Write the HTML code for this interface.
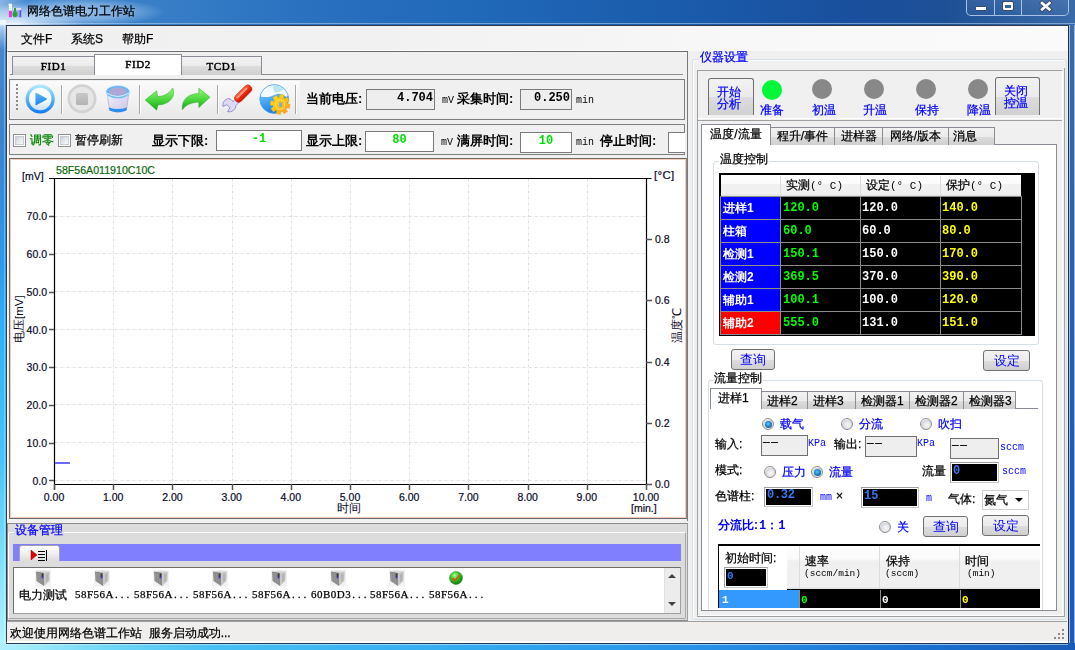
<!DOCTYPE html>
<html><head><meta charset="utf-8">
<style>
*{margin:0;padding:0;box-sizing:border-box}
.t,.tab,.tabsel{will-change:transform;-webkit-text-stroke:0.25px currentColor}
.btn{will-change:transform}
.t.b,.t.mono{-webkit-text-stroke:0}
html,body{width:1075px;height:650px;overflow:hidden}
body{position:relative;font-family:"Liberation Sans",sans-serif;font-size:12px;color:#000;background:#2a6fc0}
.a{position:absolute}
.t{position:absolute;white-space:nowrap;line-height:1}
.mono{font-family:"Liberation Mono",monospace}
.serif{font-family:"Liberation Serif",serif}
.b{font-weight:bold}
.blue{color:#0000ff}
.box{position:absolute;border:1px solid #7a7a7a}
.btn{position:absolute;border:1px solid #707070;border-radius:3px;background:linear-gradient(#f2f2f2 0%,#ebebeb 50%,#dddddd 51%,#cfcfcf 100%);color:#0000ff;font-size:13px;text-align:center}
.tab{position:absolute;border:1px solid #898c95;border-bottom:none;background:linear-gradient(#f2f2f2 0%,#ebebeb 50%,#dddddd 51%,#cfcfcf 100%);text-align:center}
.tabsel{position:absolute;border:1px solid #898c95;border-bottom:none;background:#fff;text-align:center}
</style></head><body>
<!-- title bar -->
<div class="a" style="left:0;top:0;width:1075px;height:25px;background:linear-gradient(90deg,#4a8ed4 0%,#3a80c8 13%,#2a72c0 28%,#2068b8 45%,#1a5aaa 65%,#194f9c 80%,#1e5096 88%,#3a6aa8 100%)"></div>
<div class="a" style="left:0;top:23px;width:1075px;height:1px;background:rgba(170,205,240,0.6)"></div>
<!-- frame sides -->
<div class="a" style="left:0;top:25px;width:6px;height:625px;background:linear-gradient(#4a88d0 0%,#3a82d0 18%,#2c9aec 38%,#30b2f8 50%,#48c4f8 70%,#88e4fa 88%,#b4f4fc 100%)"></div><div class="a" style="left:4px;top:25px;width:1px;height:618px;background:rgba(255,255,255,0.3)"></div><div class="a" style="left:0;top:20px;width:6px;height:30px;background:linear-gradient(rgba(235,250,255,0.9),rgba(220,240,255,0.5) 40%,rgba(200,230,255,0))"></div>
<div class="a" style="left:1068px;top:25px;width:7px;height:625px;background:linear-gradient(#3a6aa8,#2e62a8 30%,#1a5cb0 75%,#1a5cb8)"></div><div class="a" style="left:1074px;top:25px;width:1px;height:625px;background:rgba(200,220,240,0.7)"></div><div class="a" style="left:1068px;top:25px;width:1px;height:619px;background:#1c3050"></div><div class="a" style="left:1069px;top:25px;width:1px;height:619px;background:rgba(190,215,245,0.8)"></div>
<div class="a" style="left:0;top:643px;width:1075px;height:7px;background:linear-gradient(90deg,#b0f0fc 0%,#70d8f8 10%,#48c0f4 20%,#34acf0 42%,#2892e8 65%,#1a72d2 85%,#1a5cb8 100%)"></div><div class="a" style="left:6px;top:643px;width:1062px;height:1px;background:#1a3858"></div><div class="a" style="left:6px;top:644px;width:1062px;height:1px;background:rgba(230,245,255,0.55)"></div>
<!-- client area -->
<div class="a" style="left:6px;top:25px;width:1062px;height:618px;background:#f0f0f0;border:1px solid #303a4a;border-right:none;border-bottom-color:#e8f0f8"></div>
<!-- menu -->
<div class="a" style="left:7px;top:26px;width:1061px;height:25px;background:linear-gradient(90deg,#f0f0f0 0%,#f1f1f1 35%,#f8f8f8 70%,#fafafa 100%)"></div><div class="a" style="left:7px;top:50px;width:681px;height:1px;background:#fcfcfc"></div>
<div class="t" style="left:21px;top:33px;font-size:12px">文件F</div>
<div class="t" style="left:71px;top:33px;font-size:12px">系统S</div>
<div class="t" style="left:122px;top:33px;font-size:12px">帮助F</div>
<div class="a" style="left:0;top:0;width:200px;height:25px;background:radial-gradient(ellipse 70px 20px at 15px 24px,rgba(245,252,255,0.9) 0%,rgba(225,240,255,0.6) 40%,rgba(190,220,250,0) 100%),radial-gradient(ellipse 85px 14px at 80px 12px,rgba(220,238,255,0.55) 0%,rgba(210,230,255,0.4) 55%,rgba(190,220,250,0) 100%)"></div>
<div class="a" style="left:0;top:0;width:26px;height:25px;background:linear-gradient(90deg,rgba(255,255,255,0.35),rgba(255,255,255,0))"></div>
<svg class="a" style="left:7px;top:3px" width="16" height="16" viewBox="0 0 16 16">
<path d="M1,0.8 H5 V14.2 H1.8 V2.2 Z" fill="#f4f8ff"/><rect x="1.8" y="7.8" width="3.2" height="6.4" fill="#e83ae0"/>
<rect x="6" y="4.8" width="8.2" height="9.4" fill="#a8a0f0"/><rect x="12.6" y="4.8" width="1.6" height="9.4" fill="#5a50d8"/><rect x="6" y="4.8" width="8.2" height="2.4" fill="#dcdcf8"/>
<path d="M7,5 H9 V8.5 C11,9.5 11.3,13.5 8,14.3 C4.7,13.8 5,9.5 7,8.5 Z" fill="#20a830"/>
</svg>
<div class="t" style="left:27px;top:5px;font-size:12px;color:#000">网络色谱电力工作站</div>
<!-- window buttons -->
<div class="a" style="left:966px;top:-2px;width:103px;height:18px;border:1px solid rgba(180,205,235,0.9);border-radius:0 0 5px 5px;background:linear-gradient(rgba(255,255,255,0.08),rgba(255,255,255,0.02))"></div>
<div class="a" style="left:994px;top:0;width:1px;height:15px;background:rgba(180,205,235,0.9)"></div>
<div class="a" style="left:1021px;top:0;width:1px;height:15px;background:rgba(180,205,235,0.9)"></div>
<div class="a" style="left:975px;top:6px;width:12px;height:5px;background:#fff;border:1px solid #3a4a6a;border-radius:1px"></div>
<div class="a" style="left:1003px;top:2px;width:10px;height:8px;border:2px solid #fff;border-top-width:3px;outline:1px solid #3a4a6a;border-radius:1px"></div>
<svg class="a" style="left:1038px;top:0px" width="16" height="13" viewBox="0 0 16 13"><path d="M4,3 L11.5,9.5 M11.5,3 L4,9.5" stroke="#3a4a6a" stroke-width="4.4" stroke-linecap="square"/><path d="M4,3 L11.5,9.5 M11.5,3 L4,9.5" stroke="#fff" stroke-width="2.6" stroke-linecap="square"/></svg>


<!-- LEFT PANEL -->
<div class="a" style="left:7px;top:51px;width:681px;height:470px;border-left:1px solid #fff;border-top:1px solid #6e6e6e;border-right:1px solid #7a7a7a;background:#f0f0f0"></div>
<!-- tab strip line -->
<div class="a" style="left:10px;top:74px;width:673px;height:1px;background:#8c8e94"></div>
<div class="tab" style="left:12px;top:56px;width:83px;height:19px;font-size:11px;font-family:'Liberation Serif',serif;-webkit-text-stroke:0.45px #000;line-height:19px;letter-spacing:0.6px">FID1</div>
<div class="tabsel" style="left:94px;top:54px;width:88px;height:21px;font-size:11px;font-family:'Liberation Serif',serif;-webkit-text-stroke:0.45px #000;line-height:18px;letter-spacing:0.6px">FID2</div>
<div class="tab" style="left:181px;top:56px;width:81px;height:19px;font-size:11px;font-family:'Liberation Serif',serif;-webkit-text-stroke:0.45px #000;line-height:19px;letter-spacing:0.6px">TCD1</div>
<!-- toolbar box -->
<div class="a" style="left:9px;top:79px;width:676px;height:41px;border:1px solid #7e7e7e;background:#f0f0f0"></div>
<div class="a" style="left:11px;top:81px;width:289px;height:37px;background:linear-gradient(#fafafa,#f0f0f0 60%,#e8e8e8)"></div>
<!-- row2 box -->
<div class="a" style="left:9px;top:124px;width:676px;height:31px;border:1px solid #7e7e7e;background:#f0f0f0"></div>
<!-- chart -->
<div class="a" style="left:9px;top:158px;width:678px;height:361px;border:1px solid #6a6a6a;border-right-color:#8a8a8a;background:#fff"></div>
<div class="a" style="left:10px;top:159px;width:676px;height:359px;border:1px solid #f8cdb8;background:#fff"></div>
<!-- device mgmt panel -->
<div class="a" style="left:7px;top:523px;width:681px;height:98px;border:1px solid #8a8a8a;border-right-color:#a0a0a0;background:#dcdcdc"></div>
<!-- status bar -->
<div class="a" style="left:7px;top:621px;width:1060px;height:22px;border-top:1px solid #a0a0a0;background:#f0eded"></div>
<div class="a" style="left:7px;top:641px;width:1061px;height:2px;background:#fdfdfd"></div>
<div class="t" style="left:10px;top:627px;font-size:12px">欢迎使用网络色谱工作站&nbsp; 服务启动成功...</div>
<svg class="a" style="left:1054px;top:628px" width="12" height="12"><g fill="#8a8a8a"><rect x="8" y="1" width="2" height="2"/><rect x="4" y="5" width="2" height="2"/><rect x="8" y="5" width="2" height="2"/><rect x="0" y="9" width="2" height="2"/><rect x="4" y="9" width="2" height="2"/><rect x="8" y="9" width="2" height="2"/></g></svg>
<!-- RIGHT PANEL -->
<div class="a" style="left:688px;top:51px;width:380px;height:570px;background:#f0f0f0"></div>

<!-- CHART -->
<svg class="a" style="left:11px;top:159px" width="674" height="358" viewBox="11 159 674 358" font-family="Liberation Sans, sans-serif" font-size="11">
<g stroke="#f5f5f5" stroke-width="1"><line x1="113.5" y1="179" x2="113.5" y2="484" /><line x1="172.5" y1="179" x2="172.5" y2="484" /><line x1="232.5" y1="179" x2="232.5" y2="484" /><line x1="291.5" y1="179" x2="291.5" y2="484" /><line x1="350.5" y1="179" x2="350.5" y2="484" /><line x1="409.5" y1="179" x2="409.5" y2="484" /><line x1="468.5" y1="179" x2="468.5" y2="484" /><line x1="528.5" y1="179" x2="528.5" y2="484" /><line x1="587.5" y1="179" x2="587.5" y2="484" /><line x1="55" y1="480.5" x2="646" y2="480.5" /><line x1="55" y1="442.5" x2="646" y2="442.5" /><line x1="55" y1="404.5" x2="646" y2="404.5" /><line x1="55" y1="367.5" x2="646" y2="367.5" /><line x1="55" y1="329.5" x2="646" y2="329.5" /><line x1="55" y1="291.5" x2="646" y2="291.5" /><line x1="55" y1="253.5" x2="646" y2="253.5" /><line x1="55" y1="216.5" x2="646" y2="216.5" /></g><g stroke="#dedede" stroke-width="1" stroke-dasharray="2,4"><line x1="113.5" y1="179" x2="113.5" y2="484" /><line x1="172.5" y1="179" x2="172.5" y2="484" /><line x1="232.5" y1="179" x2="232.5" y2="484" /><line x1="291.5" y1="179" x2="291.5" y2="484" /><line x1="350.5" y1="179" x2="350.5" y2="484" /><line x1="409.5" y1="179" x2="409.5" y2="484" /><line x1="468.5" y1="179" x2="468.5" y2="484" /><line x1="528.5" y1="179" x2="528.5" y2="484" /><line x1="587.5" y1="179" x2="587.5" y2="484" /><line x1="55" y1="480.5" x2="646" y2="480.5" /><line x1="55" y1="442.5" x2="646" y2="442.5" /><line x1="55" y1="404.5" x2="646" y2="404.5" /><line x1="55" y1="367.5" x2="646" y2="367.5" /><line x1="55" y1="329.5" x2="646" y2="329.5" /><line x1="55" y1="291.5" x2="646" y2="291.5" /><line x1="55" y1="253.5" x2="646" y2="253.5" /><line x1="55" y1="216.5" x2="646" y2="216.5" /></g>
<path d="M49,178.5 H651.5 M54.5,178 V490 M646.5,178 V484 M54,484.5 H646.5" stroke="#000" stroke-width="1.2" fill="none"/>
<path d="M49,480.5 H54 M49,443.5 H54 M49,405.5 H54 M49,367.5 H54 M49,329.5 H54 M49,292.5 H54 M49,254.5 H54 M49,216.5 H54 M54.5,484 V490 M113.5,484 V490 M172.5,484 V490 M232.5,484 V490 M291.5,484 V490 M350.5,484 V490 M409.5,484 V490 M468.5,484 V490 M528.5,484 V490 M587.5,484 V490 M646.5,484 V490 M646,484.5 H652 M646,423.5 H652 M646,362.5 H652 M646,300.5 H652 M646,239.5 H652" stroke="#555" stroke-width="1.5" fill="none"/>
<g fill="#0a0a28" stroke="#0a0a28" stroke-width="0.2" font-size="10.5"><text x="47" y="484.5" text-anchor="end">0.0</text><text x="47" y="446.7" text-anchor="end">10.0</text><text x="47" y="409.0" text-anchor="end">20.0</text><text x="47" y="371.2" text-anchor="end">30.0</text><text x="47" y="333.5" text-anchor="end">40.0</text><text x="47" y="295.7" text-anchor="end">50.0</text><text x="47" y="257.9" text-anchor="end">60.0</text><text x="47" y="220.2" text-anchor="end">70.0</text><text x="54.0" y="501" text-anchor="middle">0.00</text><text x="113.2" y="501" text-anchor="middle">1.00</text><text x="172.4" y="501" text-anchor="middle">2.00</text><text x="231.6" y="501" text-anchor="middle">3.00</text><text x="290.8" y="501" text-anchor="middle">4.00</text><text x="350.0" y="501" text-anchor="middle">5.00</text><text x="409.2" y="501" text-anchor="middle">6.00</text><text x="468.4" y="501" text-anchor="middle">7.00</text><text x="527.6" y="501" text-anchor="middle">8.00</text><text x="586.8" y="501" text-anchor="middle">9.00</text><text x="646.0" y="501" text-anchor="middle">10.00</text><text x="655" y="488.0">0.0</text><text x="655" y="426.8">0.2</text><text x="655" y="365.6">0.4</text><text x="655" y="304.4">0.6</text><text x="655" y="243.2">0.8</text><text x="22" y="180">[mV]</text><text x="654" y="179" font-size="11.5" letter-spacing="0.3">[°C]</text><text x="631" y="512">[min.]</text><text x="349" y="512" text-anchor="middle" font-size="12" stroke-width="0">时间</text><text x="56" y="174" fill="#0a6a0a" stroke="#0a6a0a" textLength="99" lengthAdjust="spacingAndGlyphs">58F56A011910C10C</text><text transform="translate(23,343) rotate(-90)" font-size="11.5" stroke-width="0">电压[mV]</text><text transform="translate(681,343) rotate(-90)" font-size="11.5" stroke-width="0">温度℃</text></g>
<line x1="55" y1="463" x2="70" y2="463" stroke="#6a6aff" stroke-width="2"/>
</svg>

<!-- TOOLBAR ICONS -->
<svg class="a" style="left:11px;top:81px" width="290" height="38" viewBox="11 81 290 38">
<defs>
<linearGradient id="gPlay" x1="0" y1="0" x2="0" y2="1"><stop offset="0" stop-color="#b8ecff"/><stop offset="0.5" stop-color="#58b8f8"/><stop offset="1" stop-color="#1078ee"/></linearGradient>
<linearGradient id="gPlayIn" x1="0" y1="0" x2="0" y2="1"><stop offset="0" stop-color="#ffffff"/><stop offset="0.6" stop-color="#f4f8ff"/><stop offset="1" stop-color="#c8e0fa"/></linearGradient>
<linearGradient id="gTri" x1="0" y1="0" x2="0" y2="1"><stop offset="0" stop-color="#5ab4f8"/><stop offset="1" stop-color="#1a84f0"/></linearGradient>
<linearGradient id="gArrow" x1="0" y1="0" x2="0" y2="1"><stop offset="0" stop-color="#90f878"/><stop offset="0.5" stop-color="#50d840"/><stop offset="1" stop-color="#10a818"/></linearGradient>
<linearGradient id="gBody" x1="0" y1="0" x2="1" y2="1"><stop offset="0" stop-color="#f4f2fc"/><stop offset="1" stop-color="#c8c4e8"/></linearGradient>
<linearGradient id="gGlobe" x1="0" y1="0" x2="0.3" y2="1"><stop offset="0" stop-color="#a8dcff"/><stop offset="0.45" stop-color="#58b4f8"/><stop offset="1" stop-color="#1a7ee8"/></linearGradient>
<linearGradient id="gGear" x1="0" y1="0" x2="1" y2="1"><stop offset="0" stop-color="#ffe020"/><stop offset="0.5" stop-color="#ffc010"/><stop offset="1" stop-color="#f89030"/></linearGradient>
<linearGradient id="gRed" x1="0" y1="0" x2="0" y2="1"><stop offset="0" stop-color="#ff6a48"/><stop offset="0.5" stop-color="#f03010"/><stop offset="1" stop-color="#c81400"/></linearGradient>
<linearGradient id="gStop" x1="0" y1="0" x2="0" y2="1"><stop offset="0" stop-color="#c8c8c8"/><stop offset="1" stop-color="#b4b4b4"/></linearGradient>
</defs>
<!-- grip -->
<g fill="#8a8a8a"><rect x="16" y="84" width="2" height="2"/><rect x="16" y="88" width="2" height="2"/><rect x="16" y="92" width="2" height="2"/><rect x="16" y="96" width="2" height="2"/><rect x="16" y="100" width="2" height="2"/><rect x="16" y="104" width="2" height="2"/><rect x="16" y="108" width="2" height="2"/></g>
<!-- separators -->
<g fill="#a8a8a8"><rect x="61" y="85" width="1" height="29"/><rect x="139" y="85" width="1" height="29"/><rect x="217" y="85" width="1" height="29"/><rect x="295" y="85" width="1" height="29"/></g>
<g fill="#ffffff"><rect x="62" y="85" width="1" height="29"/><rect x="140" y="85" width="1" height="29"/><rect x="218" y="85" width="1" height="29"/><rect x="296" y="85" width="1" height="29"/></g>
<!-- play -->
<circle cx="40.2" cy="99" r="14.6" fill="url(#gPlay)"/>
<circle cx="40.2" cy="99" r="11.2" fill="url(#gPlayIn)"/>
<path d="M35.5,93.5 Q35,92.5 36.2,92.8 L46.5,98.2 Q47.5,99 46.5,99.8 L36.2,105.2 Q35,105.5 35.5,104.5 Z" fill="url(#gTri)"/>
<!-- stop -->
<circle cx="82" cy="98.7" r="14.5" fill="#d2d2d2"/>
<circle cx="82" cy="98.7" r="11.8" fill="#e6e6e6"/>
<rect x="76" y="93" width="12" height="12" rx="1.5" fill="url(#gStop)"/>
<!-- bucket -->
<path d="M107,92 L109.5,110 Q117.8,114.5 126.5,110 L129,92 Z" fill="url(#gBody)" stroke="#a8a0d0" stroke-width="0.6"/>
<path d="M109,107.5 Q117.8,110.5 126.8,107.5 L126.5,110.5 Q117.8,114 109.5,110.5 Z" fill="#2a8cf0"/>
<ellipse cx="117.8" cy="92" rx="11.6" ry="6.3" fill="#58b8ff" stroke="#9ad0f8" stroke-width="0.6"/>
<ellipse cx="117.8" cy="91.6" rx="9" ry="4.3" fill="#aea6d6"/>
<path d="M106.6,93 Q117.8,100 129,93" stroke="#e8f4ff" stroke-width="1" fill="none"/>
<!-- undo -->
<path d="M145.2,100 L156.7,90.8 L157.6,96.5 C164,96.5 169.5,93.5 172.6,88 C176,95 171,104.5 158,105 L156.7,110.2 Z" fill="url(#gArrow)" stroke="#2aa82a" stroke-width="0.5"/>
<!-- redo -->
<path d="M210,97.2 L198.8,88.2 L198.8,93.4 C188,93.6 181,100.5 182.4,109.8 C186,104.5 192,102.3 198.8,102.3 L198.8,107.6 Z" fill="url(#gArrow)" stroke="#2aa82a" stroke-width="0.5"/>
<!-- wrench -->
<path d="M228.8,98.6 C225,99 222.2,102.5 223,106.5 L226.8,104.6 L230,107.6 L227.6,111.6 C231.8,112.6 235.8,109.6 236,105.4 L239.5,101.8 L236.2,98.4 L232.8,101.8 C231.8,100 230.5,98.8 228.8,98.6 Z" fill="#dcdaf4" stroke="#8a86c8" stroke-width="0.9"/>
<g transform="translate(243.2,93.6) rotate(-45)"><rect x="-10.5" y="-4" width="21" height="8" rx="4" fill="url(#gRed)" stroke="#c81800" stroke-width="0.6"/><rect x="-8" y="-2.3" width="15" height="2" rx="1" fill="#ffb8a8" opacity="0.75"/></g>
<!-- globe -->
<circle cx="274.2" cy="99" r="14.4" fill="url(#gGlobe)"/>
<path d="M260.2,95 C261.5,88 267,84.6 274.2,84.6 C281.5,84.6 287,89 288.4,95.5 L286.5,97 C283,94.5 279.5,92.6 275.5,94.5 C271,96.8 266,97.8 260.6,96.5 Z" fill="#f2f9ff"/>
<path d="M272.5,86 C276.5,85 281,86.5 284,89.5 C281,91 278,93 274.5,92.5 C274,90 273,88 272.5,86 Z" fill="#b8e4fc"/>
<circle cx="274.2" cy="99" r="14.4" fill="none" stroke="#3a98ec" stroke-width="0.7"/>
<path d="M279.31,97.35 L279.85,94.61 L283.95,95.33 L283.51,98.10 L284.69,98.85 L287.02,97.29 L289.41,100.69 L287.14,102.34 L287.45,103.71 L290.19,104.25 L289.47,108.35 L286.70,107.91 L285.95,109.09 L287.51,111.42 L284.11,113.81 L282.46,111.54 L281.09,111.85 L280.55,114.59 L276.45,113.87 L276.89,111.10 L275.71,110.35 L273.38,111.91 L270.99,108.51 L273.26,106.86 L272.95,105.49 L270.21,104.95 L270.93,100.85 L273.70,101.29 L274.45,100.11 L272.89,97.78 L276.29,95.39 L277.94,97.66 Z" fill="url(#gGear)" stroke="#f0b018" stroke-width="0.5"/>
<circle cx="280.2" cy="104.6" r="4.6" fill="none" stroke="#ffe070" stroke-width="1.1"/>
<ellipse cx="280.5" cy="104.6" rx="1.4" ry="2.6" fill="#68b0e8"/>
</svg>
<!-- toolbar labels -->
<div class="t b" style="left:306px;top:92px;font-size:13px">当前电压:</div>
<div class="a" style="left:366px;top:89px;width:69px;height:21px;border:1px solid #7a7a7a;background:#eeeeee"></div>
<div class="t mono b" style="left:366px;top:92px;width:67px;text-align:right;font-size:12px">4.704</div>
<div class="t mono" style="left:442px;top:96px;font-size:10px">mV</div>
<div class="t b" style="left:457px;top:92px;font-size:13px">采集时间:</div>
<div class="a" style="left:520px;top:89px;width:52px;height:21px;border:1px solid #7a7a7a;background:#eeeeee"></div>
<div class="t mono b" style="left:520px;top:92px;width:50px;text-align:right;font-size:12px">0.250</div>
<div class="t mono" style="left:576px;top:96px;font-size:10px">min</div>
<!-- row 2 -->
<div class="a" style="left:13px;top:134px;width:13px;height:13px;border:1px solid #8e8f8f;background:#fff;padding:1px"><div style="width:100%;height:100%;border:1px solid #c8ccd4;background:linear-gradient(135deg,#c8ccd6 0%,#e4e6ea 45%,#f8f8f8 100%)"></div></div>
<div class="t" style="left:30px;top:134px;font-size:12px;color:#008000">调零</div>
<div class="a" style="left:58px;top:134px;width:13px;height:13px;border:1px solid #8e8f8f;background:#fff;padding:1px"><div style="width:100%;height:100%;border:1px solid #c8ccd4;background:linear-gradient(135deg,#c8ccd6 0%,#e4e6ea 45%,#f8f8f8 100%)"></div></div>
<div class="t" style="left:75px;top:134px;font-size:12px">暂停刷新</div>
<div class="t b" style="left:152px;top:134px;font-size:13px">显示下限:</div>
<div class="a" style="left:216px;top:130px;width:86px;height:21px;border:1px solid #7a7a7a;background:#fff"></div>
<div class="t mono b" style="left:216px;top:133px;width:86px;text-align:center;font-size:12px;color:#00e000">-1</div>
<div class="t b" style="left:306px;top:134px;font-size:13px">显示上限:</div>
<div class="a" style="left:365px;top:131px;width:69px;height:21px;border:1px solid #7a7a7a;background:#fff"></div>
<div class="t mono b" style="left:365px;top:134px;width:69px;text-align:center;font-size:12px;color:#00e000">80</div>
<div class="t mono" style="left:441px;top:138px;font-size:10px">mV</div>
<div class="t b" style="left:457px;top:134px;font-size:13px">满屏时间:</div>
<div class="a" style="left:520px;top:132px;width:52px;height:21px;border:1px solid #7a7a7a;background:#fff"></div>
<div class="t mono b" style="left:520px;top:135px;width:52px;text-align:center;font-size:12px;color:#00e000">10</div>
<div class="t mono" style="left:576px;top:138px;font-size:10px">min</div>
<div class="t b" style="left:600px;top:134px;font-size:13px">停止时间:</div>
<div class="a" style="left:668px;top:132px;width:17px;height:21px;border:1px solid #7a7a7a;border-right:none;background:#fff"></div>

<!-- RIGHT PANEL DETAIL -->
<div class="a" style="left:692px;top:59px;width:375px;height:561px;border:1px solid #d5dfe5;border-radius:3px;box-shadow:inset 1px 1px 0 #fff"></div>
<div class="t blue" style="left:699px;top:51px;font-size:12px;background:#f0f0f0;padding:0 1px">仪器设置</div>
<div class="a" style="left:697px;top:70px;width:366px;height:546px;border:1px solid #a0a0a0;border-right-color:#fff;border-bottom-color:#fff;background:#f0f0f0"></div>
<div class="a" style="left:698px;top:118px;width:364px;height:1px;background:#fff"></div>
<div class="a" style="left:698px;top:120px;width:364px;height:1px;background:#a0a0a0"></div>
<div class="a" style="left:1064px;top:68px;width:1px;height:549px;background:#a0a0a0"></div><div class="a" style="left:697px;top:616px;width:368px;height:1px;background:#a0a0a0"></div>
<!-- start button -->
<div class="a" style="left:708px;top:78px;width:46px;height:37px;border:1px solid #707070;border-bottom:none;border-radius:3px 3px 0 0;background:linear-gradient(#f2f2f2 0%,#ebebeb 50%,#dddddd 51%,#d0d0d0 100%)"></div>
<div class="t blue" style="left:717px;top:86px;font-size:12px;line-height:12px;letter-spacing:-0.5px">开始<br>分析</div>
<div class="a" style="left:995px;top:77px;width:45px;height:38px;border:1px solid #707070;border-bottom:none;border-radius:3px 3px 0 0;background:linear-gradient(#f2f2f2 0%,#ebebeb 50%,#dddddd 51%,#d0d0d0 100%)"></div>
<div class="t blue" style="left:1004px;top:85px;font-size:12px;line-height:12px;letter-spacing:-0.5px">关闭<br>控温</div>
<!-- lights -->
<div class="a" style="left:762px;top:80px;width:20px;height:20px;border-radius:50%;background:#00f838"></div>
<div class="a" style="left:812px;top:79px;width:20px;height:20px;border-radius:50%;background:#888"></div>
<div class="a" style="left:864px;top:79px;width:20px;height:20px;border-radius:50%;background:#888"></div>
<div class="a" style="left:916px;top:79px;width:20px;height:20px;border-radius:50%;background:#888"></div>
<div class="a" style="left:968px;top:79px;width:20px;height:20px;border-radius:50%;background:#888"></div>
<div class="t blue" style="left:760px;top:104px;font-size:12px">准备</div>
<div class="t blue" style="left:812px;top:104px;font-size:12px">初温</div>
<div class="t blue" style="left:863px;top:104px;font-size:12px">升温</div>
<div class="t blue" style="left:915px;top:104px;font-size:12px">保持</div>
<div class="t blue" style="left:967px;top:104px;font-size:12px">降温</div>
<!-- main tab control -->
<div class="a" style="left:701px;top:144px;width:356px;height:467px;border:1px solid #898c95;background:#fff"></div>
<div class="tab" style="left:770px;top:127px;width:65px;height:18px;font-size:12px;line-height:17px">程升/事件</div>
<div class="tab" style="left:834px;top:127px;width:49px;height:18px;font-size:12px;line-height:17px">进样器</div>
<div class="tab" style="left:882px;top:127px;width:67px;height:18px;font-size:12px;line-height:17px">网络/版本</div>
<div class="tab" style="left:948px;top:127px;width:47px;height:18px;font-size:12px;line-height:17px;text-align:left;padding-left:4px">消息</div>
<div class="tabsel" style="left:701px;top:124px;width:70px;height:21px;font-size:12px;line-height:18px">温度/流量</div>
<!-- temp group -->
<div class="a" style="left:713px;top:161px;width:326px;height:184px;border:1px solid #d5dfe5;border-radius:3px"></div>
<div class="t" style="left:719px;top:153px;font-size:12px;background:#fff;padding:0 1px">温度控制</div>

<!-- TEMP TABLE -->
<div class="a" style="left:719px;top:173px;width:316px;height:163px;background:#000"></div>
<div class="a" style="left:721px;top:175px;width:300px;height:21px;background:linear-gradient(#fdfdfd 0%,#fbfbfb 40%,#f0f0f0 45%,#f0f0f0 90%,#dedede 100%)"></div>
<div class="a" style="left:780px;top:176px;width:1px;height:19px;background:#dcdcdc"></div>
<div class="a" style="left:860px;top:176px;width:1px;height:19px;background:#dcdcdc"></div>
<div class="a" style="left:940px;top:176px;width:1px;height:19px;background:#dcdcdc"></div>
<div class="t" style="left:786px;top:179px;font-size:12px">实测<span class="mono" style="font-size:11px;-webkit-text-stroke:0">(° C)</span></div>
<div class="t" style="left:866px;top:179px;font-size:12px">设定<span class="mono" style="font-size:11px;-webkit-text-stroke:0">(° C)</span></div>
<div class="t" style="left:946px;top:179px;font-size:12px">保护<span class="mono" style="font-size:11px;-webkit-text-stroke:0">(° C)</span></div>
<div class="a" style="left:720px;top:196px;width:302px;height:139px;background:#8c8c8c"></div>
<div class="a" style="left:721px;top:197px;width:59px;height:22px;background:#0000ff"></div>
<div class="a" style="left:781px;top:197px;width:79px;height:22px;background:#000"></div>
<div class="a" style="left:861px;top:197px;width:79px;height:22px;background:#000"></div>
<div class="a" style="left:941px;top:197px;width:80px;height:22px;background:#000"></div>
<div class="t b" style="left:723px;top:202px;font-size:12px;color:#fff">进样1</div>
<div class="t mono b" style="left:783px;top:202px;font-size:12px;color:#00ff00">120.0</div>
<div class="t mono b" style="left:862px;top:202px;font-size:12px;color:#fff">120.0</div>
<div class="t mono b" style="left:942px;top:202px;font-size:12px;color:#ffff00">140.0</div>
<div class="a" style="left:721px;top:220px;width:59px;height:22px;background:#0000ff"></div>
<div class="a" style="left:781px;top:220px;width:79px;height:22px;background:#000"></div>
<div class="a" style="left:861px;top:220px;width:79px;height:22px;background:#000"></div>
<div class="a" style="left:941px;top:220px;width:80px;height:22px;background:#000"></div>
<div class="t b" style="left:723px;top:225px;font-size:12px;color:#fff">柱箱</div>
<div class="t mono b" style="left:783px;top:225px;font-size:12px;color:#00ff00">60.0</div>
<div class="t mono b" style="left:862px;top:225px;font-size:12px;color:#fff">60.0</div>
<div class="t mono b" style="left:942px;top:225px;font-size:12px;color:#ffff00">80.0</div>
<div class="a" style="left:721px;top:243px;width:59px;height:22px;background:#0000ff"></div>
<div class="a" style="left:781px;top:243px;width:79px;height:22px;background:#000"></div>
<div class="a" style="left:861px;top:243px;width:79px;height:22px;background:#000"></div>
<div class="a" style="left:941px;top:243px;width:80px;height:22px;background:#000"></div>
<div class="t b" style="left:723px;top:248px;font-size:12px;color:#fff">检测1</div>
<div class="t mono b" style="left:783px;top:248px;font-size:12px;color:#00ff00">150.1</div>
<div class="t mono b" style="left:862px;top:248px;font-size:12px;color:#fff">150.0</div>
<div class="t mono b" style="left:942px;top:248px;font-size:12px;color:#ffff00">170.0</div>
<div class="a" style="left:721px;top:266px;width:59px;height:22px;background:#0000ff"></div>
<div class="a" style="left:781px;top:266px;width:79px;height:22px;background:#000"></div>
<div class="a" style="left:861px;top:266px;width:79px;height:22px;background:#000"></div>
<div class="a" style="left:941px;top:266px;width:80px;height:22px;background:#000"></div>
<div class="t b" style="left:723px;top:271px;font-size:12px;color:#fff">检测2</div>
<div class="t mono b" style="left:783px;top:271px;font-size:12px;color:#00ff00">369.5</div>
<div class="t mono b" style="left:862px;top:271px;font-size:12px;color:#fff">370.0</div>
<div class="t mono b" style="left:942px;top:271px;font-size:12px;color:#ffff00">390.0</div>
<div class="a" style="left:721px;top:289px;width:59px;height:22px;background:#0000ff"></div>
<div class="a" style="left:781px;top:289px;width:79px;height:22px;background:#000"></div>
<div class="a" style="left:861px;top:289px;width:79px;height:22px;background:#000"></div>
<div class="a" style="left:941px;top:289px;width:80px;height:22px;background:#000"></div>
<div class="t b" style="left:723px;top:294px;font-size:12px;color:#fff">辅助1</div>
<div class="t mono b" style="left:783px;top:294px;font-size:12px;color:#00ff00">100.1</div>
<div class="t mono b" style="left:862px;top:294px;font-size:12px;color:#fff">100.0</div>
<div class="t mono b" style="left:942px;top:294px;font-size:12px;color:#ffff00">120.0</div>
<div class="a" style="left:721px;top:312px;width:59px;height:22px;background:#ff0000"></div>
<div class="a" style="left:781px;top:312px;width:79px;height:22px;background:#000"></div>
<div class="a" style="left:861px;top:312px;width:79px;height:22px;background:#000"></div>
<div class="a" style="left:941px;top:312px;width:80px;height:22px;background:#000"></div>
<div class="t b" style="left:723px;top:317px;font-size:12px;color:#fff">辅助2</div>
<div class="t mono b" style="left:783px;top:317px;font-size:12px;color:#00ff00">555.0</div>
<div class="t mono b" style="left:862px;top:317px;font-size:12px;color:#fff">131.0</div>
<div class="t mono b" style="left:942px;top:317px;font-size:12px;color:#ffff00">151.0</div>
<div class="btn" style="left:731px;top:349px;width:44px;height:21px;line-height:19px">查询</div>
<div class="btn" style="left:983px;top:350px;width:47px;height:21px;line-height:19px">设定</div>

<!-- FLOW -->
<div class="a" style="left:708px;top:380px;width:335px;height:230px;border:1px solid #d5dfe5;border-bottom:none;border-radius:3px 3px 0 0"></div>
<div class="t" style="left:713px;top:372px;font-size:12px;background:#fff;padding:0 1px">流量控制</div>
<div class="a" style="left:710px;top:408px;width:328px;height:1px;background:#898c95"></div>
<div class="tab" style="left:761px;top:391px;width:47px;height:18px;font-size:12px;line-height:18px;text-align:left;padding-left:5px">进样2</div>
<div class="tab" style="left:807px;top:391px;width:49px;height:18px;font-size:12px;line-height:18px;text-align:left;padding-left:5px">进样3</div>
<div class="tab" style="left:855px;top:391px;width:55px;height:18px;font-size:12px;line-height:18px;text-align:left;padding-left:5px">检测器1</div>
<div class="tab" style="left:909px;top:391px;width:55px;height:18px;font-size:12px;line-height:18px;text-align:left;padding-left:5px">检测器2</div>
<div class="tab" style="left:963px;top:391px;width:53px;height:18px;font-size:12px;line-height:18px;text-align:left;padding-left:5px">检测器3</div>
<div class="tabsel" style="left:710px;top:388px;width:52px;height:21px;font-size:12px;line-height:18px;text-align:left;padding-left:7px">进样1</div>
<div class="a" style="left:762px;top:418px;width:12px;height:12px;border-radius:50%;border:1px solid #8e8e8e;background:radial-gradient(circle at 58% 62%,#f6f6f6 0%,#e6e8ec 35%,#cdd2da 62%,#ffffff 70%)"></div><div class="a" style="left:764.5px;top:420.5px;width:7px;height:7px;border-radius:50%;background:radial-gradient(circle at 45% 40%,#60c8ff 0%,#2090d0 40%,#0a3a6a 100%)"></div>
<div class="t blue" style="left:780px;top:418px;font-size:12px">载气</div>
<div class="a" style="left:841px;top:418px;width:12px;height:12px;border-radius:50%;border:1px solid #8e8e8e;background:radial-gradient(circle at 58% 62%,#f6f6f6 0%,#e6e8ec 35%,#cdd2da 62%,#ffffff 70%)"></div>
<div class="t blue" style="left:859px;top:418px;font-size:12px">分流</div>
<div class="a" style="left:920px;top:418px;width:12px;height:12px;border-radius:50%;border:1px solid #8e8e8e;background:radial-gradient(circle at 58% 62%,#f6f6f6 0%,#e6e8ec 35%,#cdd2da 62%,#ffffff 70%)"></div>
<div class="t blue" style="left:938px;top:418px;font-size:12px">吹扫</div>
<div class="t" style="left:715px;top:438px;font-size:12px">输入:</div>
<div class="a" style="left:761px;top:435px;width:47px;height:21px;border:1px solid #707070;background:#eeeeee"></div>
<div class="t" style="left:763px;top:436px;font-size:12px;letter-spacing:1.5px">––</div>
<div class="t mono blue" style="left:808px;top:439px;font-size:10px">KPa</div>
<div class="t" style="left:834px;top:438px;font-size:12px">输出:</div>
<div class="a" style="left:865px;top:436px;width:52px;height:21px;border:1px solid #707070;background:#eeeeee"></div>
<div class="t" style="left:867px;top:437px;font-size:12px;letter-spacing:1.5px">––</div>
<div class="t mono blue" style="left:917px;top:439px;font-size:10px">KPa</div>
<div class="a" style="left:950px;top:438px;width:49px;height:21px;border:1px solid #707070;background:#eeeeee"></div>
<div class="t" style="left:952px;top:439px;font-size:12px;letter-spacing:1.5px">––</div>
<div class="t mono blue" style="left:1000px;top:443px;font-size:10px">sccm</div>
<div class="t" style="left:715px;top:464px;font-size:12px">模式:</div>
<div class="a" style="left:764px;top:466px;width:12px;height:12px;border-radius:50%;border:1px solid #8e8e8e;background:radial-gradient(circle at 58% 62%,#f6f6f6 0%,#e6e8ec 35%,#cdd2da 62%,#ffffff 70%)"></div>
<div class="t blue" style="left:782px;top:466px;font-size:12px">压力</div>
<div class="a" style="left:811px;top:466px;width:12px;height:12px;border-radius:50%;border:1px solid #8e8e8e;background:radial-gradient(circle at 58% 62%,#f6f6f6 0%,#e6e8ec 35%,#cdd2da 62%,#ffffff 70%)"></div><div class="a" style="left:813.5px;top:468.5px;width:7px;height:7px;border-radius:50%;background:radial-gradient(circle at 45% 40%,#60c8ff 0%,#2090d0 40%,#0a3a6a 100%)"></div>
<div class="t blue" style="left:829px;top:466px;font-size:12px">流量</div>
<div class="t" style="left:922px;top:465px;font-size:12px">流量</div>
<div class="a" style="left:950px;top:462px;width:49px;height:21px;border:1px solid #c8c8c8;border-top-color:#a0a0a0;border-left-color:#a0a0a0;padding:1px;background:#fff"><div style="width:100%;height:100%;background:#000"></div></div>
<div class="t mono b" style="left:953px;top:465px;font-size:12px;color:#3a78f0">0</div>
<div class="t mono blue" style="left:1002px;top:467px;font-size:10px">sccm</div>
<div class="t" style="left:715px;top:490px;font-size:12px">色谱柱:</div>
<div class="a" style="left:764px;top:487px;width:49px;height:20px;border:1px solid #c8c8c8;border-top-color:#a0a0a0;border-left-color:#a0a0a0;padding:1px;background:#fff"><div style="width:100%;height:100%;background:#000"></div></div>
<div class="t mono b" style="left:767px;top:489px;font-size:12px;color:#3a78f0;letter-spacing:-0.3px">0.32</div>
<div class="t mono blue" style="left:820px;top:493px;font-size:10px">mm</div>
<div class="t" style="left:836px;top:490px;font-size:12px">×</div>
<div class="a" style="left:861px;top:487px;width:58px;height:21px;border:1px solid #c8c8c8;border-top-color:#a0a0a0;border-left-color:#a0a0a0;padding:1px;background:#fff"><div style="width:100%;height:100%;background:#000"></div></div>
<div class="t mono b" style="left:864px;top:490px;font-size:12px;color:#3a78f0">15</div>
<div class="t mono blue" style="left:926px;top:494px;font-size:10px">m</div>
<div class="t" style="left:948px;top:493px;font-size:12px">气体:</div>
<div class="a" style="left:982px;top:490px;width:47px;height:20px;border:1px solid #d0d0d0;background:#fff"></div>
<div class="t" style="left:984px;top:494px;font-size:12px">氮气</div>
<svg class="a" style="left:1014px;top:497px" width="10" height="6"><path d="M1,1 H9 L5,5 Z" fill="#000"/></svg>
<div class="t b blue" style="left:718px;top:519px;font-size:12px">分流比:<span class="mono" style="margin-left:1px">1</span>：<span class="mono">1</span></div>
<div class="a" style="left:879px;top:521px;width:12px;height:12px;border-radius:50%;border:1px solid #8e8e8e;background:radial-gradient(circle at 58% 62%,#f6f6f6 0%,#e6e8ec 35%,#cdd2da 62%,#ffffff 70%)"></div>
<div class="t blue" style="left:897px;top:521px;font-size:12px">关</div>
<div class="btn" style="left:923px;top:516px;width:45px;height:21px;line-height:19px">查询</div>
<div class="btn" style="left:982px;top:515px;width:47px;height:21px;line-height:19px">设定</div>
<div class="a" style="left:718px;top:544px;width:322px;height:64px;background:#000"></div>
<div class="a" style="left:719px;top:546px;width:321px;height:43px;background:linear-gradient(#fdfdfd 0%,#fbfbfb 30%,#f0f0f0 35%,#f0f0f0 95%,#dcdcdc 100%)"></div>
<div class="a" style="left:799px;top:546px;width:1px;height:43px;background:#dcdcdc"></div>
<div class="a" style="left:879px;top:546px;width:1px;height:43px;background:#dcdcdc"></div>
<div class="a" style="left:959px;top:546px;width:1px;height:43px;background:#dcdcdc"></div>
<div class="a" style="left:719px;top:546px;width:68px;height:44px;background:#fff"></div>
<div class="t" style="left:725px;top:552px;font-size:12px">初始时间:</div>
<div class="a" style="left:724px;top:567px;width:44px;height:21px;border:1px solid #c8c8c8;border-top-color:#a0a0a0;border-left-color:#a0a0a0;padding:1px;background:#fff"><div style="width:100%;height:100%;background:#000"></div></div>
<div class="t mono b" style="left:727px;top:571px;font-size:11px;color:#3a78f0">0</div>
<div class="t" style="left:805px;top:555px;font-size:12px">速率</div>
<div class="t mono" style="left:804px;top:569px;font-size:9.5px">(sccm/min)</div>
<div class="t" style="left:886px;top:555px;font-size:12px">保持</div>
<div class="t mono" style="left:885px;top:569px;font-size:9.5px">(sccm)</div>
<div class="t" style="left:965px;top:555px;font-size:12px">时间</div>
<div class="t mono" style="left:967px;top:569px;font-size:9.5px">(min)</div>
<div class="a" style="left:719px;top:590px;width:80px;height:18px;background:#3399ff"></div>
<div class="a" style="left:880px;top:590px;width:1px;height:18px;background:#8c8c8c"></div>
<div class="a" style="left:960px;top:590px;width:1px;height:18px;background:#8c8c8c"></div>
<div class="a" style="left:799px;top:590px;width:1px;height:18px;background:#8c8c8c"></div>
<div class="t mono b" style="left:722px;top:595px;font-size:11px;color:#fff">1</div>
<div class="t mono b" style="left:801px;top:595px;font-size:11px;color:#00ff00">0</div>
<div class="t mono b" style="left:882px;top:595px;font-size:11px;color:#fff">0</div>
<div class="t mono b" style="left:962px;top:595px;font-size:11px;color:#ffff00">0</div>

<!-- DEVICES -->
<div class="a" style="left:8px;top:532px;width:678px;height:87px;border:1px solid #fff;border-right-color:#a8a8a8;border-bottom-color:#a8a8a8;border-radius:2px"></div>
<div class="t blue" style="left:14px;top:524px;font-size:12px;background:#dcdcdc;padding:0 1px">设备管理</div>
<div class="a" style="left:13px;top:544px;width:668px;height:17px;background:#8080ff"></div>
<div class="a" style="left:19px;top:545px;width:41px;height:16px;border:1px solid #a0a0b0;border-bottom:none;border-radius:3px 3px 0 0;background:linear-gradient(#ffffff,#f0f0f0 50%,#dcdcdc)"></div>
<svg class="a" style="left:30px;top:549px" width="18" height="12"><path d="M1,1 L7,6 L1,11 Z" fill="#e00000" stroke="#900" stroke-width="0.5"/><path d="M8,2.5 H15 M8,5.5 H15 M8,8.5 H15 M8,11.5 H15" stroke="#000" stroke-width="1"/><path d="M16.5,1 V12" stroke="#000" stroke-width="1"/></svg>
<div class="a" style="left:13px;top:567px;width:668px;height:47px;border:1px solid #6e6e6e;border-right-color:#a0a0a0;border-bottom-color:#a0a0a0;background:#fff"></div>
<div class="a" style="left:664px;top:568px;width:16px;height:45px;background:#ececec;border-left:1px solid #e0e0e0"></div>
<svg class="a" style="left:667px;top:573px" width="10" height="6"><path d="M1,5 L5,1 L9,5 Z" fill="#404040"/></svg>
<svg class="a" style="left:667px;top:601px" width="10" height="6"><path d="M1,1 L5,5 L9,1 Z" fill="#404040"/></svg>
<svg class="a" style="left:35px;top:570px" width="16" height="17" viewBox="0 0 16 17"><rect x="0" y="0" width="16" height="16.5" fill="#f2f2f2"/><path d="M1,1.5 L9,2.5 L9,16 L1.5,11 Z" fill="#8c8c8c"/><path d="M9,2.5 L14.8,1.5 L14.4,11 L9,16 Z" fill="#c8c8c8"/><path d="M1,1.5 L8,0.6 L14.8,1.5 L9,2.5 Z" fill="#dcdcdc"/><path d="M2.5,3 V10.5 M4.5,3 V12 M6.5,3.5 V13" stroke="#9a9a9a" stroke-width="0.6"/><path d="M11,4 L13.5,3.5 V10 L11,12.5 Z" fill="#b4b4b4"/><rect x="6.6" y="3.5" width="1.8" height="3.5" fill="#3a3a3a"/><circle cx="7.5" cy="7.5" r="1" fill="#3a3ad0"/></svg>
<div class="t" style="left:19px;top:589px;font-size:12px">电力测试</div>
<svg class="a" style="left:94px;top:570px" width="16" height="17" viewBox="0 0 16 17"><rect x="0" y="0" width="16" height="16.5" fill="#f2f2f2"/><path d="M1,1.5 L9,2.5 L9,16 L1.5,11 Z" fill="#8c8c8c"/><path d="M9,2.5 L14.8,1.5 L14.4,11 L9,16 Z" fill="#c8c8c8"/><path d="M1,1.5 L8,0.6 L14.8,1.5 L9,2.5 Z" fill="#dcdcdc"/><path d="M2.5,3 V10.5 M4.5,3 V12 M6.5,3.5 V13" stroke="#9a9a9a" stroke-width="0.6"/><path d="M11,4 L13.5,3.5 V10 L11,12.5 Z" fill="#b4b4b4"/><rect x="6.6" y="3.5" width="1.8" height="3.5" fill="#3a3a3a"/><circle cx="7.5" cy="7.5" r="1" fill="#3a3ad0"/></svg>
<div class="t serif" style="left:75px;top:589px;width:60px;text-align:left;font-size:11px;letter-spacing:0.5px">58F56A<span style="letter-spacing:3px;margin-left:1px">...</span></div>
<svg class="a" style="left:153px;top:570px" width="16" height="17" viewBox="0 0 16 17"><rect x="0" y="0" width="16" height="16.5" fill="#f2f2f2"/><path d="M1,1.5 L9,2.5 L9,16 L1.5,11 Z" fill="#8c8c8c"/><path d="M9,2.5 L14.8,1.5 L14.4,11 L9,16 Z" fill="#c8c8c8"/><path d="M1,1.5 L8,0.6 L14.8,1.5 L9,2.5 Z" fill="#dcdcdc"/><path d="M2.5,3 V10.5 M4.5,3 V12 M6.5,3.5 V13" stroke="#9a9a9a" stroke-width="0.6"/><path d="M11,4 L13.5,3.5 V10 L11,12.5 Z" fill="#b4b4b4"/><rect x="6.6" y="3.5" width="1.8" height="3.5" fill="#3a3a3a"/><circle cx="7.5" cy="7.5" r="1" fill="#3a3ad0"/></svg>
<div class="t serif" style="left:134px;top:589px;width:60px;text-align:left;font-size:11px;letter-spacing:0.5px">58F56A<span style="letter-spacing:3px;margin-left:1px">...</span></div>
<svg class="a" style="left:212px;top:570px" width="16" height="17" viewBox="0 0 16 17"><rect x="0" y="0" width="16" height="16.5" fill="#f2f2f2"/><path d="M1,1.5 L9,2.5 L9,16 L1.5,11 Z" fill="#8c8c8c"/><path d="M9,2.5 L14.8,1.5 L14.4,11 L9,16 Z" fill="#c8c8c8"/><path d="M1,1.5 L8,0.6 L14.8,1.5 L9,2.5 Z" fill="#dcdcdc"/><path d="M2.5,3 V10.5 M4.5,3 V12 M6.5,3.5 V13" stroke="#9a9a9a" stroke-width="0.6"/><path d="M11,4 L13.5,3.5 V10 L11,12.5 Z" fill="#b4b4b4"/><rect x="6.6" y="3.5" width="1.8" height="3.5" fill="#3a3a3a"/><circle cx="7.5" cy="7.5" r="1" fill="#3a3ad0"/></svg>
<div class="t serif" style="left:193px;top:589px;width:60px;text-align:left;font-size:11px;letter-spacing:0.5px">58F56A<span style="letter-spacing:3px;margin-left:1px">...</span></div>
<svg class="a" style="left:271px;top:570px" width="16" height="17" viewBox="0 0 16 17"><rect x="0" y="0" width="16" height="16.5" fill="#f2f2f2"/><path d="M1,1.5 L9,2.5 L9,16 L1.5,11 Z" fill="#8c8c8c"/><path d="M9,2.5 L14.8,1.5 L14.4,11 L9,16 Z" fill="#c8c8c8"/><path d="M1,1.5 L8,0.6 L14.8,1.5 L9,2.5 Z" fill="#dcdcdc"/><path d="M2.5,3 V10.5 M4.5,3 V12 M6.5,3.5 V13" stroke="#9a9a9a" stroke-width="0.6"/><path d="M11,4 L13.5,3.5 V10 L11,12.5 Z" fill="#b4b4b4"/><rect x="6.6" y="3.5" width="1.8" height="3.5" fill="#3a3a3a"/><circle cx="7.5" cy="7.5" r="1" fill="#3a3ad0"/></svg>
<div class="t serif" style="left:252px;top:589px;width:60px;text-align:left;font-size:11px;letter-spacing:0.5px">58F56A<span style="letter-spacing:3px;margin-left:1px">...</span></div>
<svg class="a" style="left:330px;top:570px" width="16" height="17" viewBox="0 0 16 17"><rect x="0" y="0" width="16" height="16.5" fill="#f2f2f2"/><path d="M1,1.5 L9,2.5 L9,16 L1.5,11 Z" fill="#8c8c8c"/><path d="M9,2.5 L14.8,1.5 L14.4,11 L9,16 Z" fill="#c8c8c8"/><path d="M1,1.5 L8,0.6 L14.8,1.5 L9,2.5 Z" fill="#dcdcdc"/><path d="M2.5,3 V10.5 M4.5,3 V12 M6.5,3.5 V13" stroke="#9a9a9a" stroke-width="0.6"/><path d="M11,4 L13.5,3.5 V10 L11,12.5 Z" fill="#b4b4b4"/><rect x="6.6" y="3.5" width="1.8" height="3.5" fill="#3a3a3a"/><circle cx="7.5" cy="7.5" r="1" fill="#3a3ad0"/></svg>
<div class="t serif" style="left:311px;top:589px;width:60px;text-align:left;font-size:11px;letter-spacing:0.5px">60B0D3<span style="letter-spacing:3px;margin-left:1px">...</span></div>
<svg class="a" style="left:389px;top:570px" width="16" height="17" viewBox="0 0 16 17"><rect x="0" y="0" width="16" height="16.5" fill="#f2f2f2"/><path d="M1,1.5 L9,2.5 L9,16 L1.5,11 Z" fill="#8c8c8c"/><path d="M9,2.5 L14.8,1.5 L14.4,11 L9,16 Z" fill="#c8c8c8"/><path d="M1,1.5 L8,0.6 L14.8,1.5 L9,2.5 Z" fill="#dcdcdc"/><path d="M2.5,3 V10.5 M4.5,3 V12 M6.5,3.5 V13" stroke="#9a9a9a" stroke-width="0.6"/><path d="M11,4 L13.5,3.5 V10 L11,12.5 Z" fill="#b4b4b4"/><rect x="6.6" y="3.5" width="1.8" height="3.5" fill="#3a3a3a"/><circle cx="7.5" cy="7.5" r="1" fill="#3a3ad0"/></svg>
<div class="t serif" style="left:370px;top:589px;width:60px;text-align:left;font-size:11px;letter-spacing:0.5px">58F56A<span style="letter-spacing:3px;margin-left:1px">...</span></div>
<svg class="a" style="left:448px;top:570px" width="16" height="16" viewBox="0 0 16 16"><defs><radialGradient id="gOk" cx="0.4" cy="0.3" r="0.7"><stop offset="0" stop-color="#b0ff90"/><stop offset="0.5" stop-color="#30c020"/><stop offset="1" stop-color="#108010"/></radialGradient></defs><circle cx="8" cy="8" r="6.5" fill="url(#gOk)" stroke="#208020" stroke-width="0.5"/><path d="M4.5,8 L7,10.5 L11.5,5" stroke="#e05000" stroke-width="1.3" fill="none"/></svg>
<div class="t serif" style="left:429px;top:589px;width:60px;text-align:left;font-size:11px;letter-spacing:0.5px">58F56A<span style="letter-spacing:3px;margin-left:1px">...</span></div>
</body></html>
